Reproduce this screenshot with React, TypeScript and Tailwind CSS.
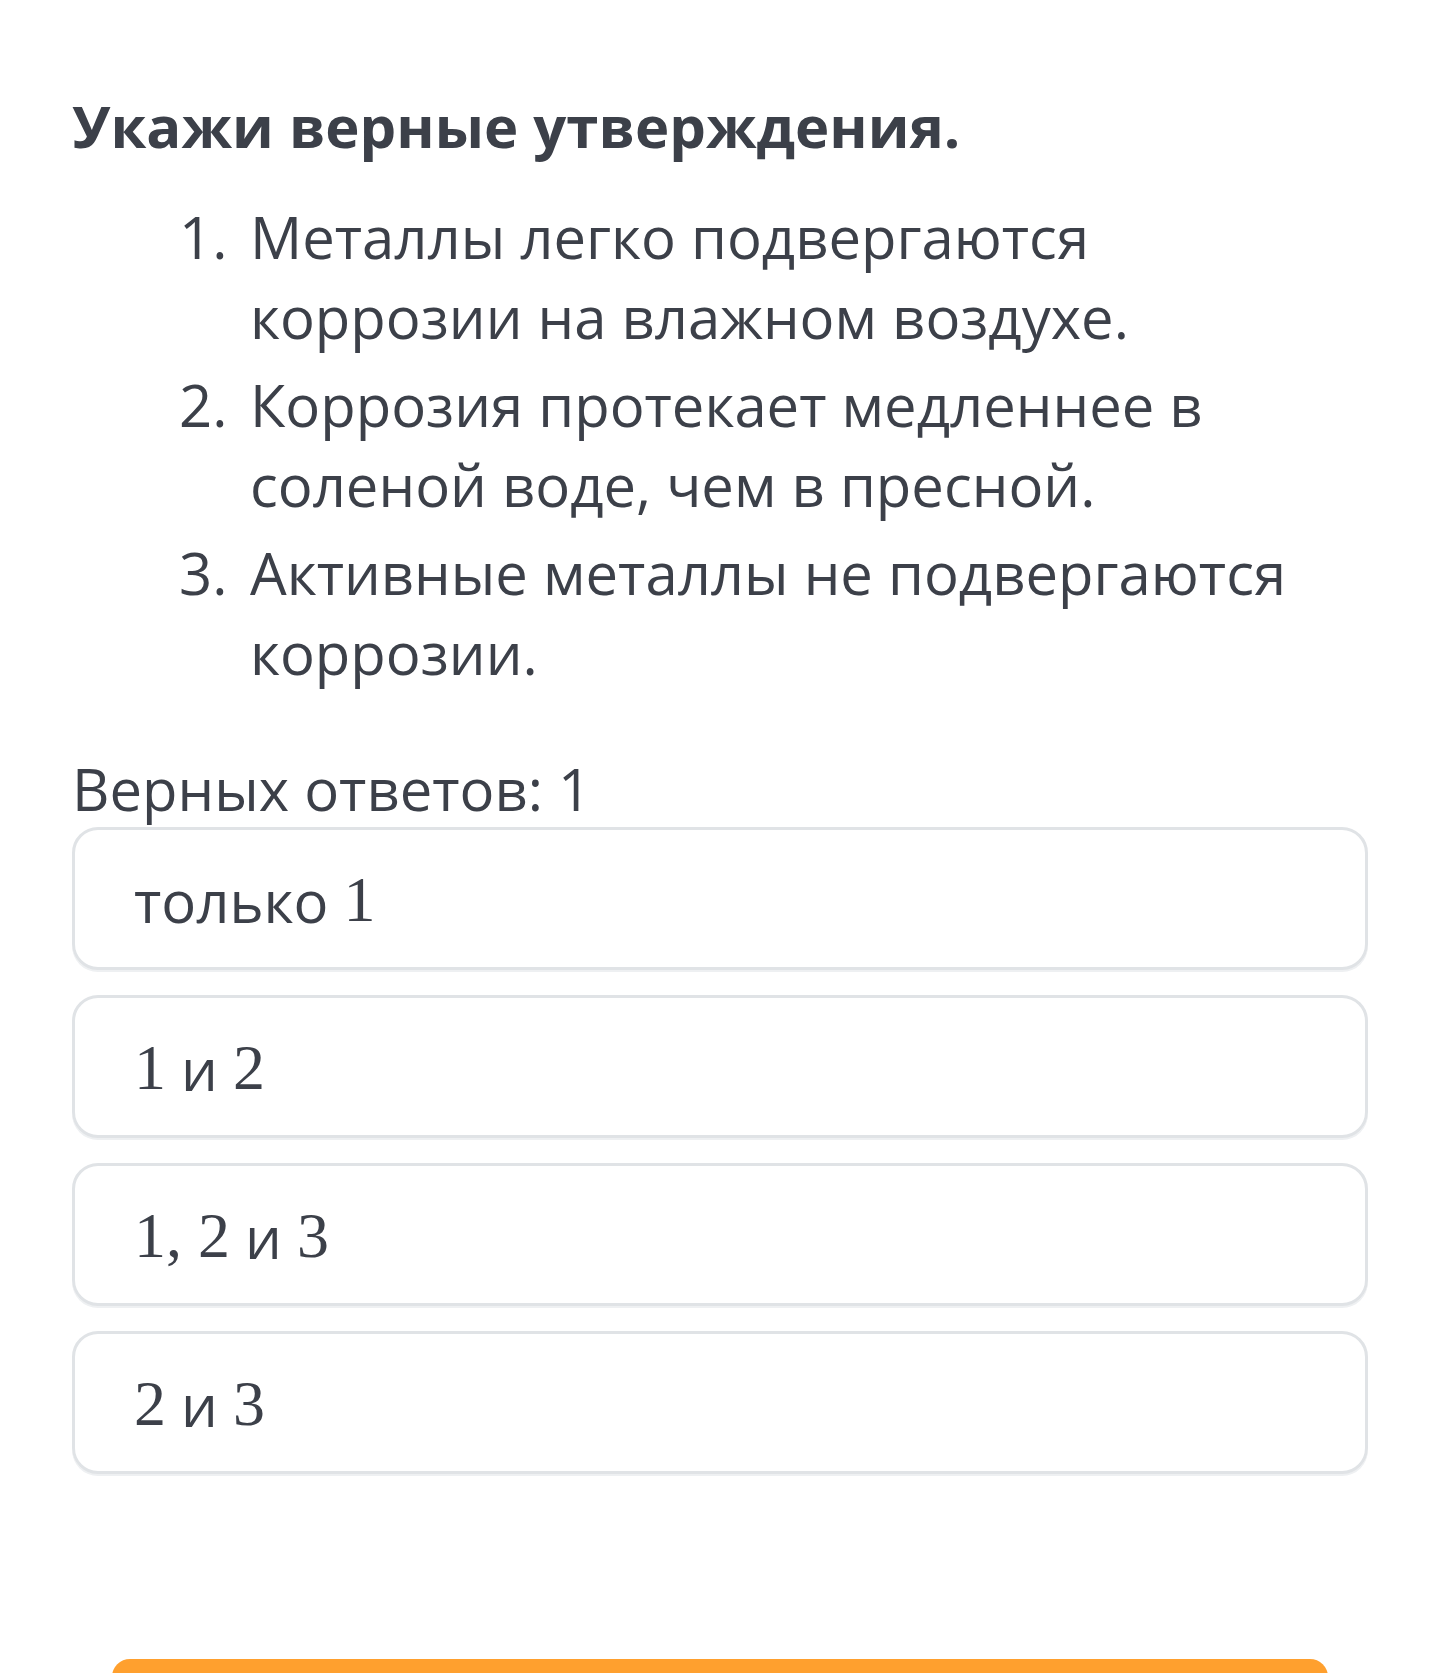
import React from "react";

const items = [
  ["Металлы легко подвергаются", "коррозии на влажном воздухе."],
  ["Коррозия протекает медленнее в", "соленой воде, чем в пресной."],
  ["Активные металлы не подвергаются", "коррозии."],
];

const options: { t: string; n: string }[][] = [
  [{ t: "только ", n: "" }, { t: "", n: "1" }],
  [{ t: "", n: "1" }, { t: " и ", n: "" }, { t: "", n: "2" }],
  [{ t: "", n: "1, 2" }, { t: " и ", n: "" }, { t: "", n: "3" }],
  [{ t: "", n: "2" }, { t: " и ", n: "" }, { t: "", n: "3" }],
];

export default function App() {
  return (
    <div
      className="relative w-[1440px] h-[1673px] overflow-hidden bg-white text-[#3c4049]"
      style={{ fontFamily: '"Open Sans", sans-serif' }}
    >
      <div className="pl-[72px] pr-[72px] pt-[86px]">
        <h1 className="text-[58px] leading-[80px] font-bold">Укажи верные утверждения.</h1>
        <ol className="mt-[31px] pl-[107px] flex flex-col gap-[8px]">
          {items.map((lines, i) => (
            <li key={i} className="flex text-[58px] leading-[80px]">
              <span className="w-[71px] shrink-0">{i + 1}.</span>
              <span className="flex flex-col">
                {lines.map((l, j) => (
                  <span key={j}>{l}</span>
                ))}
              </span>
            </li>
          ))}
        </ol>
        <div className="mt-[61px] text-[58px] leading-[70px]">Верных ответов: 1</div>
        <div className="mt-[3px] flex flex-col gap-[25px]">
          {options.map((parts, i) => (
            <div
              key={i}
              className="h-[143px] rounded-[26px] border-[3px] border-[#e0e3e6] shadow-[0_2px_0_#eef0f2] flex items-center pl-[59px] pt-[3px] text-[58px]"
            >
              {parts.map((p, j) =>
                p.n ? (
                  <span
                    key={j}
                    className="text-[64px]"
                    style={{ fontFamily: '"Liberation Serif", serif' }}
                  >
                    {p.n}
                  </span>
                ) : (
                  <span key={j} className="whitespace-pre">
                    {p.t}
                  </span>
                )
              )}
            </div>
          ))}
        </div>
      </div>
      <div className="absolute left-[112px] top-[1659px] w-[1216px] h-[40px] rounded-t-[18px] bg-[#ffa02e]" />
    </div>
  );
}
